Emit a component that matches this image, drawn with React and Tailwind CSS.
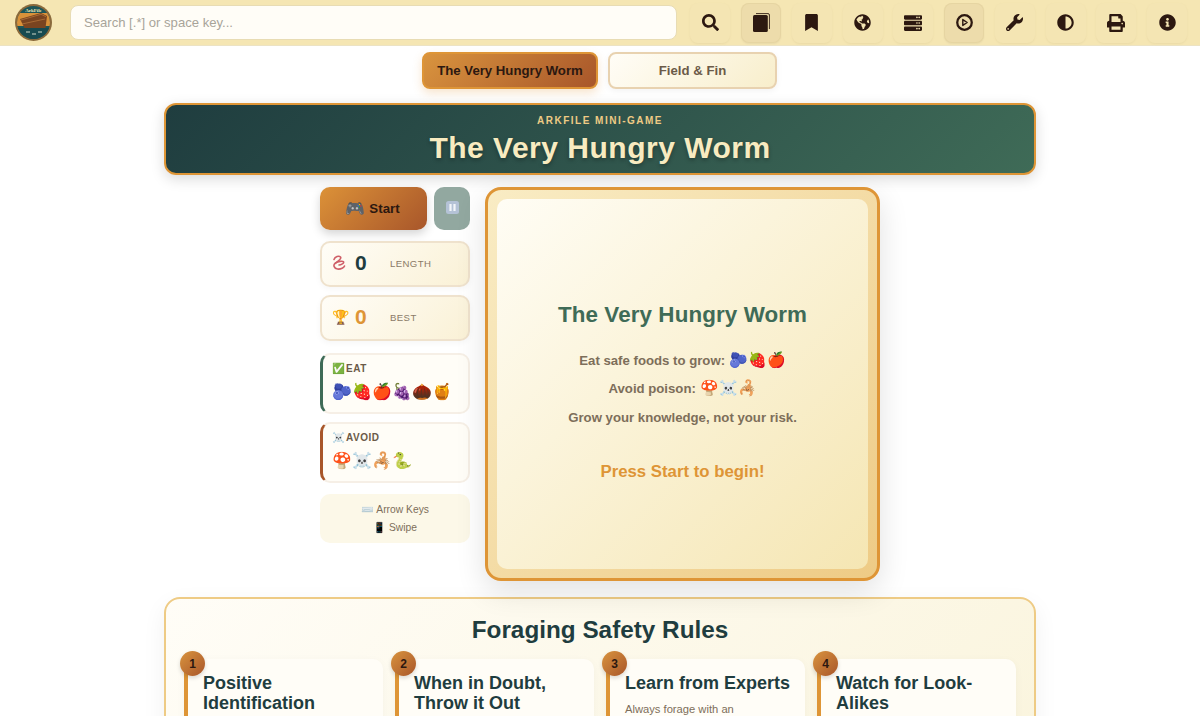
import { FaSearch, FaBookmark, FaGlobeAmericas, FaServer, FaWrench, FaAdjust, FaPrint, FaInfoCircle } from 'react-icons/fa'

function BookIcon() {
  return (
    <svg viewBox="0 0 17 19" className="h-[19px] w-[17px]">
      <path d="M3 0.6h12a1.4 1.4 0 0 1 1.4 1.4v14" fill="none" stroke="#2c1810" strokeWidth="0.9" />
      <rect x="0" y="2" width="14.8" height="17" rx="1.5" fill="#2c1810" />
    </svg>
  )
}

function PlayIcon() {
  return (
    <svg viewBox="0 0 18 18" className="h-[17px] w-[17px]" fill="none" stroke="#2c1810">
      <circle cx="9" cy="9" r="7.7" strokeWidth="2.4" />
      <path d="M7.2 5.9l4.6 3.1-4.6 3.1z" strokeWidth="1.5" strokeLinejoin="round" />
    </svg>
  )
}

function WormIcon() {
  return (
    <svg viewBox="0 0 14 16" className="h-4 w-[14px]" fill="none" stroke="#cf5f68" strokeWidth="1.6" strokeLinecap="round">
      <path d="M2 4.5c1-3 5-4 6.5-2.5S5 7 3 8.5s-1 5 2.5 5.5 6.5-1.5 7-3" />
      <path d="M3.5 8c2.5-1.5 7-2.5 8-1.2S9 10 7 10" />
    </svg>
  )
}

function PauseIcon() {
  return (
    <svg viewBox="0 0 13 13" className="mb-[2px] h-[13px] w-[13px]">
      <rect width="13" height="13" rx="2.5" fill="#b4c2d6" />
      <rect x="3.4" y="3" width="2.2" height="7" fill="#f2f5f9" />
      <rect x="7.4" y="3" width="2.2" height="7" fill="#f2f5f9" />
    </svg>
  )
}

function Logo() {
  return (
    <svg viewBox="0 0 37 37" className="h-[37px] w-[37px] shrink-0">
      <defs>
        <clipPath id="logo-clip">
          <circle cx="18.5" cy="18.5" r="16.5" />
        </clipPath>
      </defs>
      <circle cx="18.5" cy="18.5" r="18.5" fill="#8a6a3c" />
      <g clipPath="url(#logo-clip)">
        <rect width="37" height="37" fill="#1d5558" />
        <rect y="9" width="37" height="13" fill="#d9923a" />
        <path d="M5 15l21-6 6 3-1.5 12H9.5z" fill="#7a4420" />
        <path d="M6 16l20-5.7 5 2.4M7 20l23-5" fill="none" stroke="#a86a35" strokeWidth="1" />
        <rect y="24" width="37" height="13" fill="#174a50" />
        <path d="M11 28h4M17 30h4M23 28h4" stroke="#cfd8c8" strokeWidth="1" />
      </g>
      <text x="18.5" y="8" textAnchor="middle" fontSize="5" fontWeight="700" fontFamily="'Liberation Serif', serif" fill="#f5e6b3">ArkFile</text>
    </svg>
  )
}

const navButtons = [
  { icon: <FaSearch size={17} /> },
  { icon: <BookIcon />, active: true },
  { icon: <FaBookmark size={17} /> },
  { icon: <FaGlobeAmericas size={17} /> },
  { icon: <FaServer size={18} /> },
  { icon: <PlayIcon />, active: true },
  { icon: <FaWrench size={17} /> },
  { icon: <FaAdjust size={17} /> },
  { icon: <FaPrint size={18} /> },
  { icon: <FaInfoCircle size={17} /> },
]

function Header() {
  return (
    <header className="flex h-[46px] items-center border-b border-[#ece3c4] bg-[#f5e6b3] pl-[15px] pr-[13px]">
      <Logo />
      <input
        placeholder="Search [.*] or space key..."
        className="ml-[18px] h-[35px] w-[607px] rounded-lg border border-[#e8dcb4] bg-[#fffdf7] px-[13px] text-[13.1px] text-[#2c1810] placeholder:text-[#a8a49a]"
      />
      <div className="ml-auto flex gap-[10.75px]">
        {navButtons.map((b, i) => (
          <button
            key={i}
            className={`flex h-10 w-10 items-center justify-center rounded-lg text-[#2c1810] ${
              b.active
                ? 'bg-[#eddcab] shadow-[inset_0_0_0_1px_#e6d5a2,0_1px_2px_#0000000f]'
                : 'bg-[#f4e5b3] shadow-[0_1px_2px_#b8a06a26]'
            }`}
          >
            {b.icon}
          </button>
        ))}
      </div>
    </header>
  )
}

function StatCard({ emoji, value, label, valueClass }) {
  return (
    <div className="flex h-[46px] items-center rounded-[10px] border-2 border-[#efe2cd] bg-linear-135 from-[#fffdf7] to-[#faf1d6] pl-[10px] shadow-[0_2px_6px_#0000000a]">
      <span className="mb-[2px] w-[23px] text-[14px] leading-none">{emoji}</span>
      <span className={`mb-[3px] w-[35px] text-[21px] font-bold leading-none ${valueClass}`}>{value}</span>
      <span className="text-[9.6px] tracking-[0.4px] text-[#8a7a66]">{label}</span>
    </div>
  )
}

function FoodCard({ title, foods, border, mt }) {
  return (
    <div className={`h-[61px] rounded-[10px] border-2 border-l-[3px] border-[#f6efe6] bg-[#fffdf7] pl-[9px] pt-[6px] ${border} ${mt}`}>
      <div className="flex items-center text-[10px] font-bold tracking-[0.5px] text-[#6b5a48]">
        <span className="w-[14px] text-[10.5px]">{title[0]}</span>
        {title[1]}
      </div>
      <div className="mt-[5px] text-base leading-5">{foods}</div>
    </div>
  )
}

function Sidebar() {
  return (
    <aside className="flex w-[150px] flex-col">
      <div className="flex justify-between">
        <button className="flex h-[43px] w-[107px] items-center justify-center gap-1 rounded-[10px] bg-linear-135 from-[#dc9238] to-[#a8562a] pr-[2px] text-[13.3px] font-bold text-[#2c1810] shadow-[0_4px_10px_#0000002b]">
          <span className="text-base leading-none">🎮</span>Start
        </button>
        <button className="flex h-[43px] w-[36px] items-center justify-center rounded-[10px] bg-[#92a8a0]">
          <PauseIcon />
        </button>
      </div>
      <div className="mt-[11px] flex flex-col gap-2">
        <StatCard emoji={<WormIcon />} value="0" label="LENGTH" valueClass="text-[#1f3d3f]" />
        <StatCard emoji="🏆" value="0" label="BEST" valueClass="text-[#de9536]" />
      </div>
      <FoodCard title={['✅', 'EAT']} foods="🫐🍓🍎🍇🌰🍯" border="border-l-[#3f6b57]" mt="mt-3" />
      <FoodCard title={['☠️', 'AVOID']} foods="🍄☠️🦂🐍" border="border-l-[#a8562a]" mt="mt-2" />
      <div className="mt-[11px] flex h-[49px] flex-col items-center justify-center gap-[3px] rounded-[10px] bg-[#fcf8e8] text-[10.3px] leading-[15px] text-[#7d6e5a]">
        <span>⌨️ Arrow Keys</span>
        <span>📱 Swipe</span>
      </div>
    </aside>
  )
}

function GameBoard() {
  return (
    <div className="h-[394px] w-[395px] rounded-2xl border-[3px] border-[#de9536] bg-linear-135 from-[#f9ecc4] to-[#eecb85] p-[9px] shadow-[0_10px_30px_#0000001f]">
      <div className="flex h-full flex-col items-center rounded-[10px] bg-linear-135 from-[#fffdf5] to-[#f5e6b3] pt-[102px]">
        <h2 className="text-[22.4px] font-bold leading-7 tracking-[0.1px] text-[#3f6b57]">The Very Hungry Worm</h2>
        <p className="mt-[21px] text-[13.2px] font-bold leading-5 text-[#7d6e5a]">
          Eat safe foods to grow: <span className="text-[15px]">🫐🍓🍎</span>
        </p>
        <p className="mt-[7px] text-[13.2px] font-bold leading-5 text-[#7d6e5a]">
          Avoid poison: <span className="text-[15px]">🍄☠️🦂</span>
        </p>
        <p className="mt-[9px] text-[13.2px] font-bold leading-5 text-[#7d6e5a]">Grow your knowledge, not your risk.</p>
        <p className="mt-[32px] text-[16.8px] font-bold leading-6 text-[#de9536]">Press Start to begin!</p>
      </div>
    </div>
  )
}

const rules = [
  { title: 'Positive Identification' },
  { title: 'When in Doubt, Throw it Out' },
  { title: 'Learn from Experts', text: 'Always forage with an' },
  { title: 'Watch for Look-Alikes' },
]

function RulesPanel() {
  return (
    <section className="mt-4 rounded-2xl border-2 border-[#eecb85] bg-linear-135 from-[#fffdf7] to-[#faf4dc] px-[18px] pb-6 pt-4 shadow-[0_8px_24px_#0000000f]">
      <h2 className="text-center text-[24.3px] font-bold leading-[30px] text-[#1f3d3f]">Foraging Safety Rules</h2>
      <div className="mt-[14px] grid grid-cols-4 gap-3">
        {rules.map((r, i) => (
          <div key={r.title} className="relative h-[140px] rounded-r-[10px] border-l-4 border-[#de9536] bg-[#fffdf7] pl-[15px] pr-2 pt-[14px] shadow-[0_2px_8px_#0000000a]">
            <span className="absolute -left-[8px] -top-[8px] flex h-[25px] w-[25px] items-center justify-center rounded-full bg-linear-135 from-[#d9943e] to-[#a8562a] text-xs font-bold text-[#2c1810] shadow-[0_2px_4px_#00000026]">
              {i + 1}
            </span>
            <h3 className={`text-lg font-bold leading-5 text-[#1f3d3f] ${i === 0 ? 'w-[130px]' : ''} ${i === 1 ? 'w-[150px]' : ''}`}>{r.title}</h3>
            {r.text && <p className="mt-[8px] text-[11.2px] leading-4 text-[#7d6e5a]">{r.text}</p>}
          </div>
        ))}
      </div>
    </section>
  )
}

export default function App() {
  return (
    <div className="h-[716px] overflow-hidden bg-white font-['Liberation_Sans',Arial,sans-serif]">
      <Header />
      <div className="mt-[6px] flex justify-center gap-[10px] pr-[1px]">
        <button className="h-[37px] w-[176px] rounded-lg border-2 border-[#de9536] bg-linear-135 from-[#d9943e] to-[#a8562a] text-[13.2px] font-bold text-[#2c1810] shadow-[0_4px_10px_#de953640]">
          The Very Hungry Worm
        </button>
        <button className="h-[37px] w-[169px] rounded-lg border-2 border-[#e8d2b0] bg-linear-135 from-[#fffdf7] to-[#f8eecb] text-[13.2px] font-bold text-[#6b5a48] shadow-[0_2px_6px_#0000000d]">
          Field &amp; Fin
        </button>
      </div>
      <main className="mx-auto mt-[14px] w-[872px]">
        <div className="flex h-[72px] flex-col items-center rounded-xl border-2 border-[#de9536] bg-linear-135 from-[#1f3d3f] to-[#3f6b57] pt-[10px] shadow-[0_4px_14px_#00000026]">
          <div className="text-[10px] font-bold leading-3 tracking-[1.5px] text-[#eecb85]">ARKFILE MINI-GAME</div>
          <h1 className="mt-[2px] text-[30px] font-bold leading-[38px] tracking-[0.5px] text-[#f8ebc0] [text-shadow:0_2px_4px_#0000004d]">The Very Hungry Worm</h1>
        </div>
        <div className="mt-3 flex justify-center gap-[15px]">
          <Sidebar />
          <GameBoard />
        </div>
        <RulesPanel />
      </main>
    </div>
  )
}
